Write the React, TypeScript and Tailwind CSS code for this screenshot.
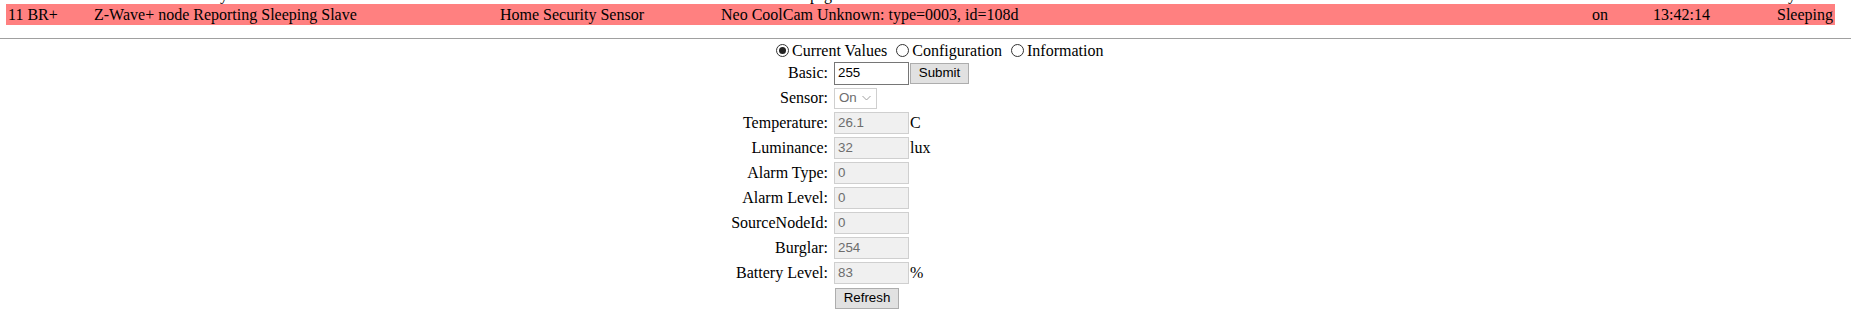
import React from "react";

const serif = { fontFamily: '"Liberation Serif", "Times New Roman", serif' };

function Radio({ checked }: { checked?: boolean }) {
  return (
    <span className="ml-[5px] mr-[3px] flex h-[13px] w-[13px] shrink-0 items-center justify-center rounded-full border border-[#333333] bg-white">
      {checked ? <span className="h-[7px] w-[7px] rounded-full bg-[#222222]" /> : null}
    </span>
  );
}

function DisabledInput({ value }: { value: string }) {
  return (
    <div className="flex h-[22px] w-[75px] items-center border border-[#cfcfcf] bg-[#f0f0f0] pl-[3px] font-['Liberation_Sans',Arial,sans-serif] text-[13.33px] text-[#6d6d6d]">
      {value}
    </div>
  );
}

function Row({
  label,
  children,
  unit,
}: {
  label: string;
  children: React.ReactNode;
  unit?: string;
}) {
  return (
    <div className="mb-[3px] flex h-[22px] items-center">
      <div className="w-[104px] pr-[6px] text-right text-[16px] leading-[18px] text-black" style={serif}>
        {label}
      </div>
      <div className="flex w-[76px] items-center">{children}</div>
      {unit ? (
        <div className="text-[16px] leading-[18px] text-black" style={serif}>
          {unit}
        </div>
      ) : null}
    </div>
  );
}

export default function App() {
  return (
    <div className="h-[328px] w-[1851px] overflow-hidden bg-white text-black" style={serif}>
      {/* descenders of previous row */}
      <div className="h-[4px] overflow-hidden">
        <div className="-mt-[14px] flex text-[16px] leading-[18px]">
          <span className="ml-[220px]">y</span>
          <span className="ml-[582px]">p</span>
          <span className="ml-[6px]">g</span>
          <span className="ml-[956px]">y</span>
        </div>
      </div>

      {/* highlighted node row */}
      <div className="ml-[6px] flex h-[21px] w-[1829px] items-center bg-[#ff8080] text-[16px] leading-[18px]">
        <div className="w-[88px] pl-[2px]">11 BR+</div>
        <div className="w-[406px]">Z-Wave+ node Reporting Sleeping Slave</div>
        <div className="w-[221px]">Home Security Sensor</div>
        <div className="w-[871px]">Neo CoolCam Unknown: type=0003, id=108d</div>
        <div className="w-[61px]">on</div>
        <div className="w-[124px]">13:42:14</div>
        <div>Sleeping</div>
      </div>

      <div className="mt-[13px] h-px w-full bg-[#a0a0a0]" />

      {/* radio row */}
      <div className="flex h-[23px] items-center pl-[771px] text-[16px] leading-[18px]">
        <Radio checked />
        <span className="pr-[4px]">Current Values</span>
        <Radio />
        <span className="pr-[4px]">Configuration</span>
        <Radio />
        <span>Information</span>
      </div>

      {/* values */}
      <div className="ml-[730px] flex flex-col">
        <Row label="Basic:">
          <div className="flex h-[23px] w-[75px] shrink-0 items-center border border-[#767676] bg-white pl-[3px] font-['Liberation_Sans',Arial,sans-serif] text-[13.33px] text-black">
            255
          </div>
          <button className="ml-[1px] flex h-[21px] w-[59px] shrink-0 items-center justify-center border border-[#adadad] bg-[#e1e1e1] font-['Liberation_Sans',Arial,sans-serif] text-[13.33px] text-black">
            Submit
          </button>
        </Row>
        <Row label="Sensor:">
          <div className="flex h-[21px] w-[43px] items-center justify-between border border-[#cfcfcf] bg-white pl-[4px] pr-[5px] font-['Liberation_Sans',Arial,sans-serif] text-[13.33px] text-[#6d6d6d]">
            <span>On</span>
            <svg width="9" height="6" viewBox="0 0 9 6" fill="none">
              <path d="M0.5 1 L4.5 5 L8.5 1" stroke="#a0a0a0" strokeWidth="1" />
            </svg>
          </div>
        </Row>
        <Row label="Temperature:" unit="C">
          <DisabledInput value="26.1" />
        </Row>
        <Row label="Luminance:" unit="lux">
          <DisabledInput value="32" />
        </Row>
        <Row label="Alarm Type:">
          <DisabledInput value="0" />
        </Row>
        <Row label="Alarm Level:">
          <DisabledInput value="0" />
        </Row>
        <Row label="SourceNodeId:">
          <DisabledInput value="0" />
        </Row>
        <Row label="Burglar:">
          <DisabledInput value="254" />
        </Row>
        <Row label="Battery Level:" unit="%">
          <DisabledInput value="83" />
        </Row>
        <Row label="">
          <button className="ml-[1px] flex h-[21px] w-[64px] shrink-0 items-center justify-center border border-[#adadad] bg-[#e1e1e1] font-['Liberation_Sans',Arial,sans-serif] text-[13.33px] text-black">
            Refresh
          </button>
        </Row>
      </div>
    </div>
  );
}
